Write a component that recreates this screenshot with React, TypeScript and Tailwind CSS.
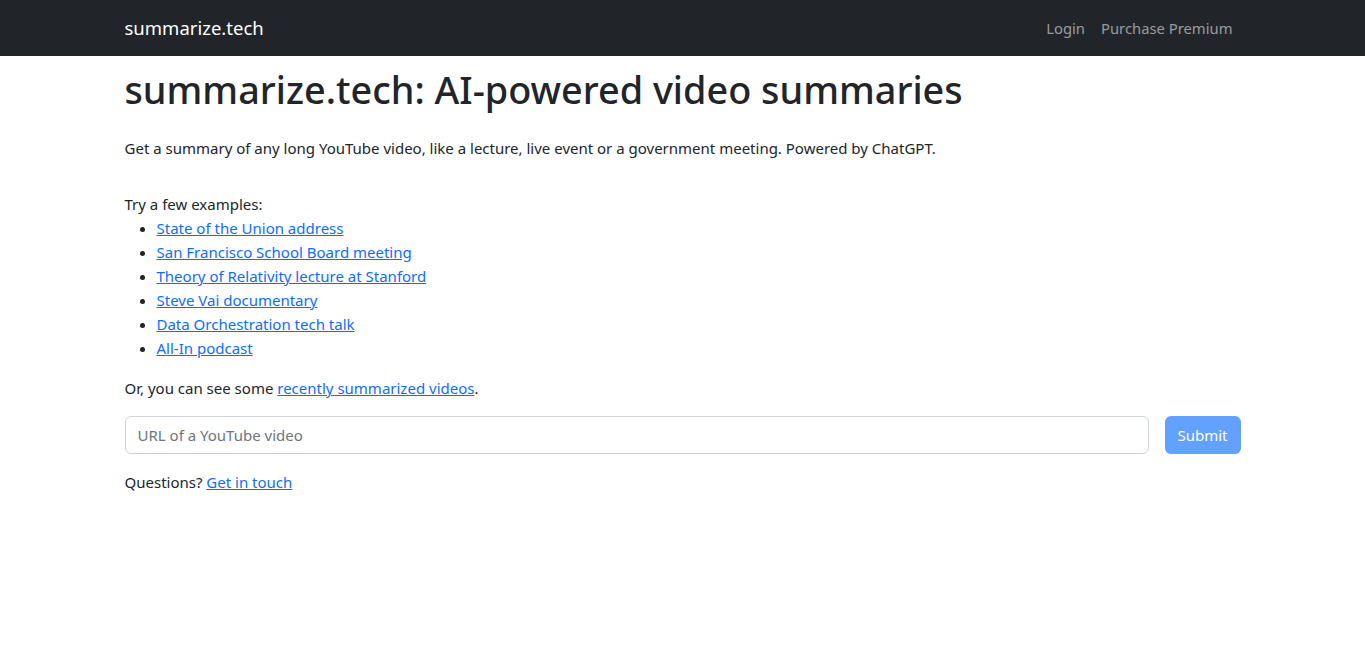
const examples = [
  "State of the Union address",
  "San Francisco School Board meeting",
  "Theory of Relativity lecture at Stanford",
  "Steve Vai documentary",
  "Data Orchestration tech talk",
  "All-In podcast",
];

export default function App() {
  return (
    <div className="min-h-screen bg-white text-[#212529] text-[15px] leading-6 font-['Noto_Sans',sans-serif]">
      <nav className="bg-[#212529] h-14">
        <div className="max-w-[1140px] mx-auto px-3 h-full flex items-center justify-between">
          <a href="#" className="text-white text-[18.5px] leading-[30px]">summarize.tech</a>
          <div className="flex">
            <a href="#" className="px-2 text-[#ffffff8c] text-[14.8px]">Login</a>
            <a href="#" className="px-2 text-[#ffffff8c] text-[14.8px]">Purchase Premium</a>
          </div>
        </div>
      </nav>
      <main className="max-w-[1140px] mx-auto px-3">
        <h1 className="text-[37.8px] leading-[48px] font-medium mt-[10px] mb-[22px]">
          summarize.tech: AI-powered video summaries
        </h1>
        <p className="mb-8">
          Get a summary of any long YouTube video, like a lecture, live event or a government meeting. Powered by ChatGPT.
        </p>
        <p>Try a few examples:</p>
        <ul className="list-disc pl-8 mb-4">
          {examples.map((e) => (
            <li key={e}>
              <a href="#" className="text-[#0d6efd] underline">{e}</a>
            </li>
          ))}
        </ul>
        <p className="mb-4">
          Or, you can see some <a href="#" className="text-[#0d6efd] underline">recently summarized videos</a>.
        </p>
        <form className="flex gap-4 mb-4">
          <input
            type="text"
            placeholder="URL of a YouTube video"
            className="flex-1 h-[38px] px-3 border border-[#ced4da] rounded-md placeholder:text-[#6c757d] outline-none"
          />
          <button type="button" className="h-[38px] w-[76px] rounded-md bg-[#62a1fe] text-white">
            Submit
          </button>
        </form>
        <p>
          Questions? <a href="#" className="text-[#0d6efd] underline">Get in touch</a>
        </p>
      </main>
    </div>
  );
}
